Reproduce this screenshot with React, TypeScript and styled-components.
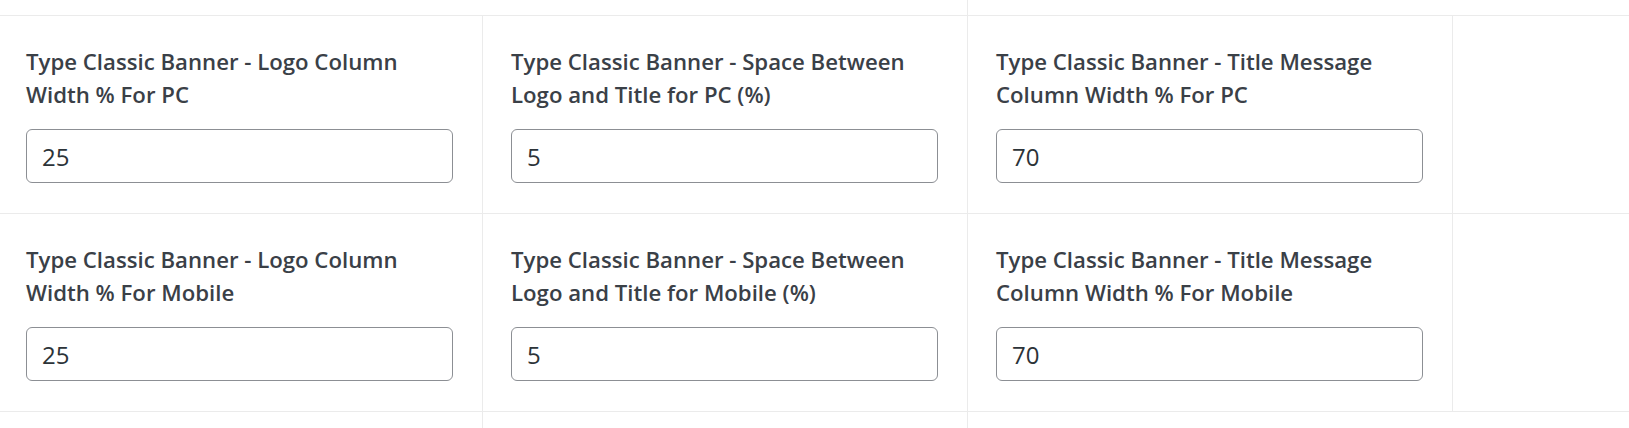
import React from "react";
import styled, { createGlobalStyle } from "styled-components";

const GlobalStyle = createGlobalStyle`
  html, body {
    margin: 0;
    padding: 0;
    background: #ffffff;
    overflow: hidden;
  }
  body {
    font-family: "Open Sans", "Noto Sans", sans-serif;
  }
`;

const LINE = "#ebebeb";

const Grid = styled.div`
  display: grid;
  grid-template-columns: repeat(4, 485px);
  margin-left: -2px;
  width: max-content;
`;

const StubCell = styled.div<{ $span: number; $height: number; $divider: boolean; $bottom: boolean }>`
  box-sizing: border-box;
  grid-column: span ${(p) => p.$span};
  height: ${(p) => p.$height}px;
  border-right: 1px solid ${(p) => (p.$divider ? LINE : "transparent")};
  border-bottom: 1px solid ${(p) => (p.$bottom ? LINE : "transparent")};
`;

const FieldCell = styled.div<{ $divider: boolean }>`
  box-sizing: border-box;
  height: 198px;
  padding: 28px 29px 30px 28px;
  border-right: 1px solid ${(p) => (p.$divider ? LINE : "transparent")};
  border-bottom: 1px solid ${LINE};
  display: flex;
  flex-direction: column;
`;

const Label = styled.label`
  display: block;
  font-family: "Open Sans", "Noto Sans", sans-serif;
  font-weight: 600;
  font-size: 22.2px;
  line-height: 33px;
  color: #3a4047;
  margin-bottom: 19px;
  height: 66px;
  padding-top: 1px;
  box-sizing: border-box;
`;

const Input = styled.input`
  box-sizing: border-box;
  width: 100%;
  height: 54px;
  margin: 0;
  padding: 0 15px;
  border: 1px solid #8c8f94;
  border-radius: 6px;
  background: #ffffff;
  font-family: "Open Sans", "Noto Sans", sans-serif;
  font-weight: 400;
  font-size: 24px;
  color: #2c3338;
  outline: none;
`;

type Field = { label: string; value: string };

const rows: Field[][] = [
  [
    { label: "Type Classic Banner - Logo Column Width % For PC", value: "25" },
    { label: "Type Classic Banner - Space Between Logo and Title for PC (%)", value: "5" },
    { label: "Type Classic Banner - Title Message Column Width % For PC", value: "70" },
  ],
  [
    { label: "Type Classic Banner - Logo Column Width % For Mobile", value: "25" },
    { label: "Type Classic Banner - Space Between Logo and Title for Mobile (%)", value: "5" },
    { label: "Type Classic Banner - Title Message Column Width % For Mobile", value: "70" },
  ],
];

export default function App() {
  return (
    <>
      <GlobalStyle />
      <Grid>
        <StubCell $span={2} $height={16} $divider $bottom />
        <StubCell $span={2} $height={16} $divider={false} $bottom />

        {rows.map((row, ri) => (
          <React.Fragment key={ri}>
            {row.map((f, ci) => (
              <FieldCell key={ci} $divider>
                <Label>{f.label}</Label>
                <Input type="text" defaultValue={f.value} readOnly />
              </FieldCell>
            ))}
            <FieldCell $divider={false} />
          </React.Fragment>
        ))}

        <StubCell $span={1} $height={40} $divider $bottom={false} />
        <StubCell $span={1} $height={40} $divider $bottom={false} />
        <StubCell $span={2} $height={40} $divider={false} $bottom={false} />
      </Grid>
    </>
  );
}
